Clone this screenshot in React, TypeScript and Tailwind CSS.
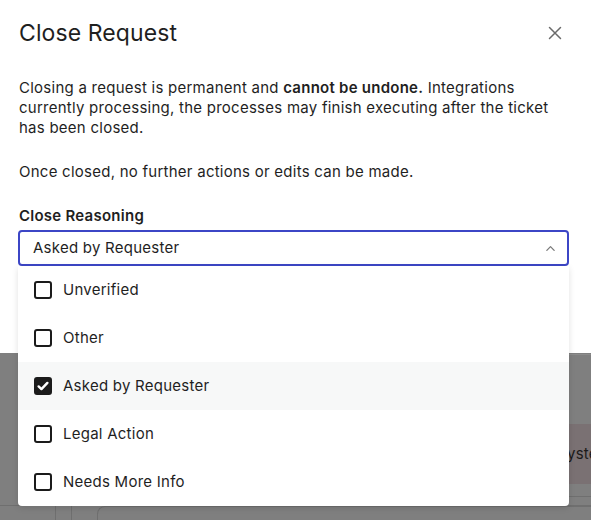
import { useState } from "react";

const options = ["Unverified", "Other", "Asked by Requester", "Legal Action", "Needs More Info"];

function Checkbox({ checked }: { checked: boolean }) {
  return (
    <span
      className={
        "flex h-[18px] w-[18px] shrink-0 items-center justify-center rounded-[3px] border-2 border-[#1b1b1b] " +
        (checked ? "bg-[#1b1b1b]" : "bg-white")
      }
    >
      {checked && (
        <svg viewBox="0 0 16 16" className="h-[14px] w-[14px]" fill="none" stroke="white" strokeWidth="2.8" strokeLinecap="round" strokeLinejoin="round">
          <path d="M3 8.5l3.2 3L13 4.5" />
        </svg>
      )}
    </span>
  );
}

export default function App() {
  const [selected] = useState("Asked by Requester");

  return (
    <div
      className="relative h-[520px] w-full overflow-hidden bg-[#7f7f7f] text-[#1f1f1f] tracking-[0.25px]"
      style={{ fontFamily: "Inter, 'Noto Sans', sans-serif" }}
    >
      {/* page behind the backdrop */}
      <div className="absolute inset-x-0 top-[353px] bottom-0">
        <div className="ml-auto mt-[1px] h-px w-[22px] bg-[#8c8c8c]" />
        <div className="ml-auto mt-[69px] flex h-[60px] w-[22px] items-center overflow-hidden bg-[#7a7173] text-[15px] text-[#1a1a1a]">
          <span className="-ml-[2px]">yste</span>
        </div>
        <div className="ml-auto mt-[12px] h-px w-[22px] bg-[#6f6f6f]" />
        <div className="mt-[8px] flex h-[20px] border-t border-[#6f6f6f]">
          <div className="ml-[55px] w-[17px] border-x border-[#6f6f6f]" />
          <div className="ml-[25px] flex-1 rounded-tl-[8px] border-l border-t border-[#6f6f6f]" />
        </div>
      </div>

      {/* modal */}
      <div className="relative h-[353px] bg-white px-[19px]">
        <div className="flex items-center justify-between pt-[18px]">
          <h1 className="text-[23px] leading-[30px] tracking-[0.1px] text-[#1f1f1f]">Close Request</h1>
          <button className="mr-[9px] text-[#6b6b6b]">
            <svg viewBox="0 0 16 16" className="h-[16px] w-[16px]" fill="none" stroke="currentColor" strokeWidth="1.5" strokeLinecap="round">
              <path d="M2.5 2.5l11 11M13.5 2.5l-11 11" />
            </svg>
          </button>
        </div>

        <p className="mt-[30px] text-[15px] leading-[20px]">
          Closing a request is permanent and <b className="font-semibold">cannot be undone.</b> Integrations currently
          processing, the processes may finish executing after the ticket has been closed.
        </p>
        <p className="mt-[24px] text-[15px] leading-[20px]">Once closed, no further actions or edits can be made.</p>

        <div className="mt-[24px] text-[15px] font-semibold leading-[20px]">Close Reasoning</div>
        <div className="relative mt-[4px] -ml-px w-[551px]">
          <div className="flex h-[36px] items-center justify-between rounded-[4px] border-2 border-[#3c46c6] pl-[13px] pr-[11px] text-[15px]">
            <span>{selected}</span>
            <svg viewBox="0 0 12 12" className="h-[11px] w-[11px]" fill="none" stroke="#7a7a7a" strokeWidth="1.4" strokeLinecap="round" strokeLinejoin="round">
              <path d="M2 8l4-4 4 4" />
            </svg>
          </div>

          <ul className="absolute left-0 right-0 top-[36px] z-10 rounded-b-[4px] bg-white shadow-[0_2px_6px_rgba(0,0,0,0.12)]">
            {options.map((o) => (
              <li
                key={o}
                className={
                  "flex h-[48px] items-center gap-[11px] pl-[16px] text-[15px] " +
                  (o === selected ? "bg-[#f7f8f8]" : "")
                }
              >
                <Checkbox checked={o === selected} />
                <span>{o}</span>
              </li>
            ))}
          </ul>
        </div>
      </div>
    </div>
  );
}
